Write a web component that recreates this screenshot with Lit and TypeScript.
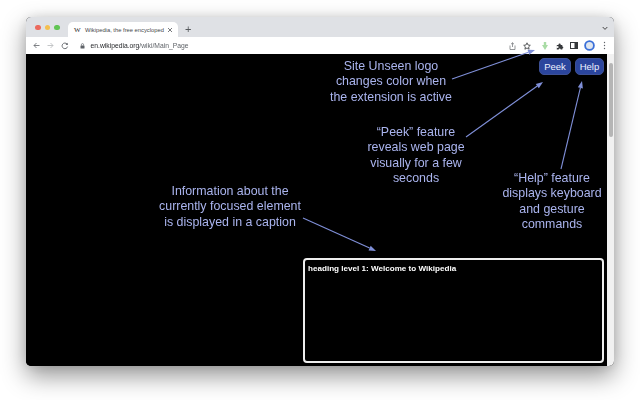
import { LitElement, html, css, svg } from "lit";
import { customElement } from "lit/decorators.js";

const arrows: [number, number, number, number][] = [
  [452, 79, 535, 50],
  [466, 137, 543, 82],
  [561, 169, 582, 81],
  [303, 218, 376, 251],
];

function arrow([x1, y1, x2, y2]: [number, number, number, number]) {
  const a = Math.atan2(y2 - y1, x2 - x1);
  const l = 7, w = 2.6;
  const bx = x2 - l * Math.cos(a), by = y2 - l * Math.sin(a);
  const nx = -Math.sin(a) * w, ny = Math.cos(a) * w;
  return svg`<line x1=${x1} y1=${y1} x2=${bx} y2=${by} stroke="#7f8fd8" stroke-width="1.1"/>
    <polygon points="${x2},${y2} ${bx + nx},${by + ny} ${bx - nx},${by - ny}" fill="#7f8fd8"/>`;
}

@customElement("app-root")
export class AppRoot extends LitElement {
  static styles = css`
    :host { display: block; width: 640px; height: 400px; background: #fff; overflow: hidden; font-family: "Liberation Sans", Arial, sans-serif; }
    .stage { width: 640px; height: 400px; padding: 17px 26px 34px 26px; box-sizing: border-box; filter: blur(0.3px); }
    .window { position: relative; height: 349px; border-radius: 5px; overflow: hidden; box-shadow: 0 10px 24px rgba(0,0,0,.42), 0 0 12px rgba(0,0,0,.1); display: flex; flex-direction: column; background: #000; }
    .tabs { height: 20px; background: #dfe1e5; display: flex; align-items: flex-end; flex: none; }
    .lights { display: flex; gap: 4px; padding: 0 0 7px 9px; width: 42px; box-sizing: border-box; flex: none; }
    .lights i { width: 5.5px; height: 5.5px; border-radius: 50%; display: block; }
    .red { background: #ec6a5e; }
    .amber { background: #f4bf4f; }
    .green { background: #61c554; }
    .tab { width: 110px; height: 15px; background: #fff; border-radius: 5px 5px 0 0; display: flex; align-items: center; box-sizing: border-box; padding: 0 5px 0 6px; font-size: 5.8px; color: #45474a; flex: none; }
    .w { font-family: "Liberation Serif", serif; font-size: 7px; color: #222; width: 11px; flex: none; }
    .title { flex: none; width: 81px; white-space: nowrap; }
    .x { margin-left: auto; display: block; }
    .plus { font-size: 11px; color: #55585c; margin: 0 0 1px 7px; line-height: 14px; }
    .spacer { flex: 1; }
    .chev { margin: 0 6px 6px 0; display: block; }
    .bar { height: 17px; background: #fff; display: flex; align-items: center; flex: none; padding: 0 8.5px 0 6.5px; gap: 7px; }
    .omni { flex: 1; display: flex; align-items: center; font-size: 6.75px; height: 14px; padding-left: 4.5px; gap: 5.5px; white-space: nowrap; }
    .omni b { font-weight: 400; color: #1f2124; }
    .omni span { color: #5f6368; }
    .tools { display: flex; align-items: center; }
    .star { margin-left: 7.5px; }
    .logo { margin-left: 11px; }
    .puzzle { margin-left: 8px; }
    .panel { margin-left: 6px; }
    .avatar { margin-left: 5.5px; }
    .dots { margin-left: 8px; }
    .page { position: relative; flex: 1; background: #000; }
    .scroll { position: absolute; right: 0; top: 0; bottom: 0; width: 7px; background: #f1f1f1; }
    .thumb { position: absolute; left: 2px; right: 1px; top: 9px; height: 74px; background: #b5b5b5; border-radius: 3px; }
    .note { position: absolute; transform: translateX(-50%); white-space: nowrap; text-align: center; color: #aab4ee; font-size: 12.4px; line-height: 15.3px; }
    .site { left: 365px; top: 5px; }
    .peek { left: 390px; top: 71px; }
    .help { left: 526px; top: 117px; }
    .info { left: 204px; top: 130px; }
    .btn { position: absolute; top: 4px; height: 17px; box-sizing: border-box; background: #2b459d; border: 1px solid #3d5095; border-radius: 5px; color: #eef1ff; font-size: 9.5px; line-height: 15px; text-align: center; }
    .b-peek { left: 513px; width: 32px; }
    .b-help { left: 549px; width: 29px; }
    .caption { position: absolute; left: 277px; top: 204px; width: 301px; height: 105px; box-sizing: border-box; border: 2px solid #eeeeee; border-radius: 4px; color: #fff; font-size: 8.1px; font-weight: 700; padding: 3px; line-height: 11px; }
    .arrows { position: absolute; left: -26px; top: -54px; width: 640px; height: 400px; pointer-events: none; }
  `;

  render() {
    return html`<div class="stage"><div class="window">
      <div class="tabs">
        <div class="lights"><i class="red"></i><i class="amber"></i><i class="green"></i></div>
        <div class="tab"><span class="w">W</span><span class="title">Wikipedia, the free encycloped</span><svg class="x" width="6" height="6" viewBox="0 0 6 6"><path d="M1 1l4 4M5 1L1 5" fill="none" stroke="#55585c" stroke-width=".8"/></svg></div>
        <span class="plus">+</span>
        <span class="spacer"></span>
        <svg class="chev" width="6" height="5" viewBox="0 0 6 5"><path d="M.7 1l2.3 2.4L5.3 1" fill="none" stroke="#444" stroke-width="1"/></svg>
      </div>
      <div class="bar">
        <svg width="7" height="7" viewBox="0 0 7 7"><path d="M6.5 3.5H1M3.5 1L1 3.5 3.5 6" fill="none" stroke="#5f6368" stroke-width=".8"/></svg>
        <svg width="7" height="7" viewBox="0 0 7 7"><path d="M.5 3.5H6M3.5 1L6 3.5 3.5 6" fill="none" stroke="#b5b7ba" stroke-width=".8"/></svg>
        <svg width="8" height="8" viewBox="0 0 8 8"><path d="M6.6 4.6A2.8 2.8 0 1 1 6 2" fill="none" stroke="#5f6368" stroke-width=".9"/><path d="M6.8.8v2.2H4.6z" fill="#5f6368"/></svg>
        <div class="omni">
          <svg width="5" height="6" viewBox="0 0 5 6"><rect x=".5" y="2.4" width="4" height="3.2" rx=".5" fill="#5f6368"/><path d="M1.4 2.6V1.7a1.1 1.1 0 0 1 2.2 0v.9" fill="none" stroke="#5f6368" stroke-width=".7"/></svg>
          <div><b>en.wikipedia.org</b><span>/wiki/Main_Page</span></div>
        </div>
        <div class="tools">
          <svg width="7" height="8" viewBox="0 0 7 8"><path d="M1 3.5v4h5v-4M3.5 5V.8M2 2.2L3.5.8 5 2.2" fill="none" stroke="#6a6d71" stroke-width=".7"/></svg>
          <svg class="star" width="8" height="8" viewBox="0 0 8 8"><path d="M4 .8l1 2.2 2.3.3-1.7 1.6.5 2.3L4 6l-2.1 1.2.5-2.3L.7 3.3 3 3z" fill="none" stroke="#36383b" stroke-width=".8"/></svg>
          <svg class="logo" width="6" height="8" viewBox="0 0 6 8"><path d="M1.8 0h2.4v3H6L3 8 0 3h1.8z" fill="#a9dca5"/></svg>
          <svg class="puzzle" width="8" height="8" viewBox="0 0 8 8"><path d="M.8 3h1.7a1 1 0 0 1 0-.4 1.1 1.1 0 1 1 2.2 0 1 1 0 0 1 0 .4h1.6v1.5a1 1 0 1 1 0 2v.9H4.7a1 1 0 1 0-2 0H.8V5.6a1 1 0 1 0 0-1.2z" fill="#36383b"/></svg>
          <svg class="panel" width="8" height="7" viewBox="0 0 8 7"><rect x=".5" y=".5" width="7" height="6" fill="none" stroke="#36383b"/><rect x="4.5" y=".5" width="3" height="6" fill="#36383b"/></svg>
          <svg class="avatar" width="11" height="11" viewBox="0 0 11 11"><circle cx="5.5" cy="5.5" r="4.4" fill="#dfe6ef" stroke="#3a6fd8" stroke-width="1.8"/></svg>
          <svg class="dots" width="3" height="9" viewBox="0 0 3 9"><circle cx="1.5" cy="1.5" r=".7" fill="#5f6368"/><circle cx="1.5" cy="4.5" r=".7" fill="#5f6368"/><circle cx="1.5" cy="7.5" r=".7" fill="#5f6368"/></svg>
        </div>
      </div>
      <div class="page">
        <div class="note site">Site Unseen logo<br>changes color when<br>the extension is active</div>
        <div class="note peek">“Peek” feature<br>reveals web page<br>visually for a few<br>seconds</div>
        <div class="note help">“Help” feature<br>displays keyboard<br>and gesture<br>commands</div>
        <div class="note info">Information about the<br>currently focused element<br>is displayed in a caption</div>
        <div class="btn b-peek">Peek</div>
        <div class="btn b-help">Help</div>
        <div class="caption">heading level 1: Welcome to Wikipedia</div>
        <div class="scroll"><div class="thumb"></div></div>
        <svg class="arrows" viewBox="0 0 640 400">${arrows.map(arrow)}</svg>
      </div>
    </div></div>`;
  }
}
